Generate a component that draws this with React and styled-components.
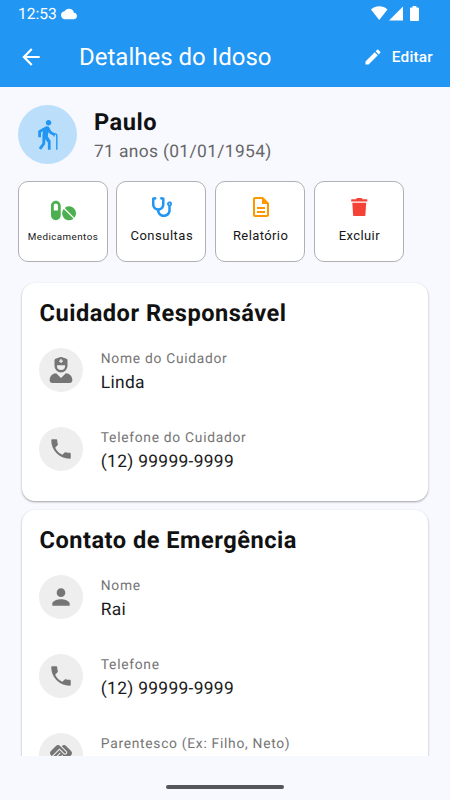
import React from 'react';
import styled, { createGlobalStyle } from 'styled-components';
import {
  MdArrowBack,
  MdEdit,
  MdElderly,
  MdOutlineDescription,
  MdPhone,
  MdPerson,
  MdHandshake,
  MdCloud,
} from 'react-icons/md';
import { FaPills, FaStethoscope, FaTrash, FaUserNurse } from 'react-icons/fa';

const GlobalStyle = createGlobalStyle`
  * {
    box-sizing: border-box;
  }

  body {
    margin: 0;
    background: #f8f9ff;
    font-family: Roboto, sans-serif;
    color: #14161a;
    text-rendering: geometricPrecision;
  }

  svg {
    display: block;
    flex-shrink: 0;
  }
`;

const Screen = styled.div`
  display: flex;
  flex-direction: column;
  width: 450px;
  height: 800px;
  overflow: hidden;
  background: #f8f9ff;
`;

const Header = styled.header`
  height: 87px;
  flex-shrink: 0;
  background: #2196f3;
  color: #fff;
`;

const StatusBar = styled.div`
  display: flex;
  align-items: center;
  height: 27px;
  padding: 0 31px 0 18px;
`;

const Clock = styled.span`
  margin-right: 4px;
  font-size: 15.6px;
  line-height: 26px;
`;

const StatusIcons = styled.div`
  display: flex;
  align-items: center;
  gap: 7px;
  margin-left: auto;
`;

const AppBar = styled.div`
  display: flex;
  align-items: center;
  height: 60px;
  padding: 0 17px 0 18px;
`;

const AppTitle = styled.h1`
  flex: 1;
  margin: 0 0 0 35px;
  font-size: 24px;
  font-weight: 400;
  line-height: 30px;
`;

const EditButton = styled.button`
  display: flex;
  align-items: center;
  gap: 9px;
  padding: 0;
  border: none;
  background: none;
  color: #fff;
  font-family: inherit;
  font-size: 15.4px;
  font-weight: 500;
  letter-spacing: 0.2px;
`;

const Content = styled.main`
  flex: 1;
  min-height: 0;
  overflow: hidden;
  padding: 18px 17.5px 0;
`;

const Profile = styled.section`
  display: flex;
  height: 59px;
`;

const Avatar = styled.div`
  display: flex;
  align-items: center;
  justify-content: center;
  width: 59px;
  height: 59px;
  margin-right: 17.5px;
  padding-right: 1px;
  border-radius: 50%;
  background: #bbdefb;
  color: #2196f3;
`;

const Name = styled.div`
  padding-top: 1px;
  font-size: 23.6px;
  font-weight: 700;
  line-height: 32px;
  color: #111;
  letter-spacing: 0.5px;
`;

const Age = styled.div`
  font-size: 17.4px;
  line-height: 28px;
  color: #666;
  letter-spacing: 0.35px;
`;

const Actions = styled.div`
  display: flex;
  gap: 8.8px;
  margin-top: 17px;
`;

const ActionButton = styled.button`
  display: flex;
  flex-direction: column;
  align-items: center;
  width: 90px;
  height: 81px;
  padding: ${(props) => props.$top} 0 0 1px;
  border: 1px solid #b0b0b2;
  border-radius: 10px;
  background: #fff;
  color: ${(props) => props.$color};
`;

const ActionLabel = styled.span`
  margin-top: ${(props) => props.$gap};
  font-family: Roboto, sans-serif;
  font-size: ${(props) => props.$size};
  line-height: 18px;
  color: #161616;
  letter-spacing: ${(props) => props.$spacing};
  white-space: nowrap;
`;

const Card = styled.section`
  height: ${(props) => props.$height};
  margin: ${(props) => props.$top} 4.5px 0;
  padding: 15px 17px 0 17.5px;
  border-radius: 13px;
  background: #fff;
  box-shadow: 0 1px 2px rgba(0, 0, 0, 0.28), 0 1px 3px rgba(0, 0, 0, 0.1);
`;

const CardTitle = styled.h2`
  margin: 0 0 20px;
  font-size: 23.6px;
  font-weight: 700;
  line-height: 30px;
  color: #111;
  letter-spacing: 0.5px;
`;

const InfoRow = styled.div`
  display: flex;
  height: 44px;
  margin-bottom: 34.8px;
`;

const InfoIcon = styled.div`
  display: flex;
  align-items: center;
  justify-content: center;
  width: 44px;
  height: 44px;
  margin: 0 17.5px 0 -0.2px;
  border-radius: 50%;
  background: #eee;
  color: #757575;
`;

const InfoText = styled.div`
  padding-top: 1px;
`;

const InfoLabel = styled.div`
  font-size: 13.8px;
  line-height: 20px;
  color: #757575;
  letter-spacing: 0.72px;
`;

const InfoValue = styled.div`
  font-size: 17.4px;
  line-height: 28px;
  color: #1a1b20;
  letter-spacing: 0.3px;
`;

const BottomBar = styled.footer`
  display: flex;
  justify-content: center;
  height: 44px;
  flex-shrink: 0;
  padding-top: 29px;
`;

const HomeHandle = styled.div`
  width: 118px;
  height: 4px;
  border-radius: 2px;
  background: #53565a;
`;

const WifiSignal = () => (
  <svg width="32" height="15" viewBox="0 0 32 15" fill="currentColor">
    <path d="M0 3.4C4.5-.9 12-.9 16.5 3.4L8.2 14z" />
    <path d="M18 14.4H32V.6z" />
  </svg>
);

const Battery = () => (
  <svg width="9" height="15" viewBox="0 0 9 15" fill="currentColor">
    <path d="M2.6 0h3.8v1.5H8a1 1 0 0 1 1 1V14a1 1 0 0 1-1 1H1a1 1 0 0 1-1-1V2.5a1 1 0 0 1 1-1h1.6z" />
  </svg>
);

const actions = [
  { label: 'Medicamentos', icon: <FaPills size={25} />, color: '#4caf50', size: '9.8px', top: '16px', gap: '5px', spacing: '0.45px' },
  { label: 'Consultas', icon: <FaStethoscope size={20} />, color: '#2196f3', size: '13px', top: '15px', gap: '10px', spacing: '0.5px' },
  { label: 'Relatório', icon: <MdOutlineDescription size={24} />, color: '#ff9800', size: '13px', top: '13px', gap: '8px', spacing: '0.4px' },
  { label: 'Excluir', icon: <FaTrash size={18.5} />, color: '#f44336', size: '13px', top: '15.5px', gap: '10.5px', spacing: '0.4px' },
];

const caregiver = [
  { label: 'Nome do Cuidador', value: 'Linda', icon: <FaUserNurse size={26} /> },
  { label: 'Telefone do Cuidador', value: '(12) 99999-9999', icon: <MdPhone size={26} /> },
];

const emergency = [
  { label: 'Nome', value: 'Rai', icon: <MdPerson size={26} /> },
  { label: 'Telefone', value: '(12) 99999-9999', icon: <MdPhone size={26} /> },
  { label: 'Parentesco (Ex: Filho, Neto)', icon: <MdHandshake size={26} /> },
];

function InfoCard({ title, items, height, top }) {
  return (
    <Card $height={height} $top={top}>
      <CardTitle>{title}</CardTitle>
      {items.map((item) => (
        <InfoRow key={item.label}>
          <InfoIcon>{item.icon}</InfoIcon>
          <InfoText>
            <InfoLabel>{item.label}</InfoLabel>
            {item.value && <InfoValue>{item.value}</InfoValue>}
          </InfoText>
        </InfoRow>
      ))}
    </Card>
  );
}

function App() {
  return (
    <Screen>
      <GlobalStyle />
      <Header>
        <StatusBar>
          <Clock>12:53</Clock>
          <MdCloud size={16} />
          <StatusIcons>
            <WifiSignal />
            <Battery />
          </StatusIcons>
        </StatusBar>
        <AppBar>
          <MdArrowBack size={26} />
          <AppTitle>Detalhes do Idoso</AppTitle>
          <EditButton>
            <MdEdit size={20} />
            Editar
          </EditButton>
        </AppBar>
      </Header>
      <Content>
        <Profile>
          <Avatar>
            <MdElderly size={33} />
          </Avatar>
          <div>
            <Name>Paulo</Name>
            <Age>71 anos (01/01/1954)</Age>
          </div>
        </Profile>
        <Actions>
          {actions.map((action) => (
            <ActionButton key={action.label} $color={action.color} $top={action.top}>
              {action.icon}
              <ActionLabel $size={action.size} $gap={action.gap} $spacing={action.spacing}>
                {action.label}
              </ActionLabel>
            </ActionButton>
          ))}
        </Actions>
        <InfoCard title="Cuidador Responsável" items={caregiver} height="218px" top="21.4px" />
        <InfoCard title="Contato de Emergência" items={emergency} height="297px" top="8.6px" />
      </Content>
      <BottomBar>
        <HomeHandle />
      </BottomBar>
    </Screen>
  );
}

export default App;
